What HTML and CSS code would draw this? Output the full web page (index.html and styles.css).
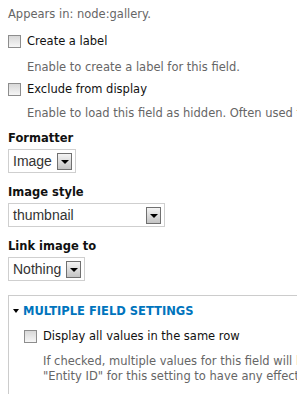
FILE: index.html
```html
<!DOCTYPE html>
<html lang="en">
<head>
    <meta charset="UTF-8">
    <meta name="viewport" content="width=device-width, initial-scale=1.0">
    <title>Field settings</title>
    <link rel="stylesheet" href="styles.css">
</head>
<body>
    <p class="appears">Appears in: node:gallery.</p>

    <div class="form-item first">
        <label class="check"><span class="checkbox"></span>Create a label</label>
        <div class="description">Enable to create a label for this field.</div>
    </div>

    <div class="form-item second">
        <label class="check"><span class="checkbox"></span>Exclude from display</label>
        <div class="description">Enable to load this field as hidden. Often used to group fields, or to use as token in another field.</div>
    </div>

    <div class="form-item select-item formatter">
        <div class="field-label">Formatter</div>
        <div class="select"><span class="select-value">Image</span><span class="select-btn"></span></div>
    </div>

    <div class="form-item select-item">
        <div class="field-label">Image style</div>
        <div class="select select-wide"><span class="select-value">thumbnail</span><span class="select-btn"></span></div>
    </div>

    <div class="form-item select-item">
        <div class="field-label">Link image to</div>
        <div class="select"><span class="select-value">Nothing</span><span class="select-btn"></span></div>
    </div>

    <div class="fieldset">
        <div class="legend"><span class="arrow"></span>MULTIPLE FIELD SETTINGS</div>
        <div class="fieldset-body">
            <label class="check"><span class="checkbox"></span>Display all values in the same row</label>
            <div class="description">If checked, multiple values for this field will be shown in the same row. If not checked, each value in this field will create a new row. If using group by, please make sure to group by<br>"Entity ID" for this setting to have any effect.</div>
        </div>
    </div>
</body>
</html>
```

FILE: styles.css
```css
html {
    overflow: hidden;
}

body {
    margin: 0;
    padding: 0 0 0 8px;
    font-family: "DejaVu Sans", Verdana, sans-serif;
    font-size: 11.5px;
    color: #000;
    background: #fff;
    width: 700px;
}

.appears {
    margin: 0;
    padding-top: 7px;
    line-height: 14px;
    color: #666;
}

.form-item {
    margin-top: 9px;
}

.form-item.first {
    margin-top: 13px;
}

.form-item.first .description {
    margin-top: 12px;
}

.form-item.second {
    margin-top: 7px;
}

.form-item.select-item {
    margin-top: 12px;
}

.form-item.formatter {
    margin-top: 10px;
}

.check {
    display: flex;
    align-items: center;
    line-height: 14px;
    white-space: nowrap;
    color: #111;
}

.checkbox {
    width: 11px;
    height: 11px;
    border: 1px solid #8d8d8d;
    background: linear-gradient(#d8d8d8, #f6f6f6);
    margin-right: 6px;
    flex: none;
}

.description {
    color: #666;
    padding-left: 19px;
    margin-top: 10px;
    line-height: 15px;
    white-space: nowrap;
}

.field-label {
    font-weight: bold;
    line-height: 14px;
    color: #111;
}

.select {
    display: inline-flex;
    align-items: center;
    box-sizing: border-box;
    border: 1px solid #cfcfcf;
    height: 24px;
    padding: 0 3px 0 4px;
    margin-top: 4px;
    font-family: "Liberation Sans", Arial, sans-serif;
    font-size: 14px;
    color: #333;
}

.select-wide {
    width: 157px;
}

.select-value {
    flex: 1;
    margin-right: 5px;
}

.select-btn {
    width: 13px;
    height: 15px;
    border: 1px solid #707070;
    background: linear-gradient(#f4f4f4, #c4c4c4);
    position: relative;
}

.select-btn::after {
    content: "";
    position: absolute;
    left: 3px;
    top: 6px;
    border-left: 4px solid transparent;
    border-right: 4px solid transparent;
    border-top: 4px solid #000;
}

.fieldset {
    margin-top: 14px;
    border-top: 1px solid #ccc;
    border-left: 1px solid #ccc;
    padding: 8px 0 10px 4px;
}

.legend {
    display: flex;
    align-items: center;
    font-weight: bold;
    color: #0074bd;
    line-height: 14px;
}

.arrow {
    width: 0;
    height: 0;
    border-left: 3px solid transparent;
    border-right: 3px solid transparent;
    border-top: 4px solid #000;
    margin-right: 4px;
}

.fieldset-body {
    padding-left: 11px;
    margin-top: 11px;
}

.fieldset-body .description {
    margin-top: 11px;
}
```
